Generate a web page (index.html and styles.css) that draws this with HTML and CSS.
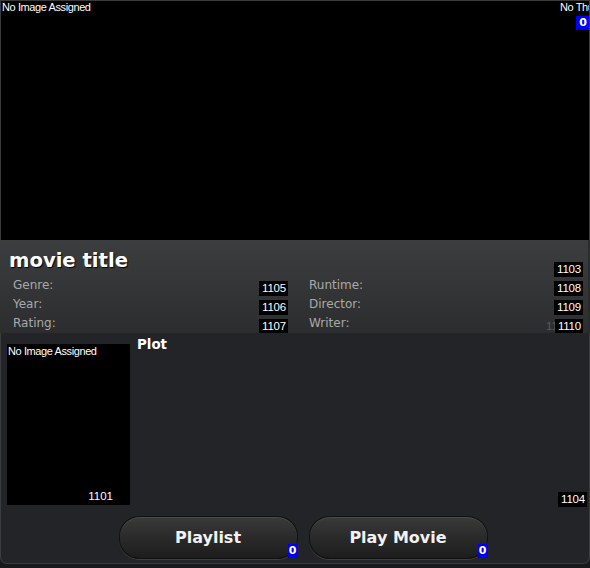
FILE: index.html
```html
<!DOCTYPE html>
<html>
<head>
<meta charset="utf-8">
<link rel="stylesheet" href="styles.css">
</head>
<body>
<div class="app">
  <div class="top">
    <div class="small-label">No Image Assigned</div>
    <div class="top-right">
      <div class="small-label clip">No Thumbnail Assigned</div>
      <span class="blue-badge">0</span>
    </div>
  </div>
  <div class="info">
    <div class="title-row">
      <div class="title">movie title</div>
      <span class="badge">1103</span>
    </div>
    <div class="fields">
      <div class="field"><span class="label">Genre:</span><span class="badge">1105</span></div>
      <div class="field"><span class="label">Runtime:</span><span class="badge">1108</span></div>
      <div class="field"><span class="label">Year:</span><span class="badge">1106</span></div>
      <div class="field"><span class="label">Director:</span><span class="badge">1109</span></div>
      <div class="field"><span class="label">Rating:</span><span class="badge">1107</span></div>
      <div class="field"><span class="label">Writer:</span><span class="right-group"><span class="ghost">1110</span><span class="badge">1110</span></span></div>
    </div>
  </div>
  <div class="lower">
    <div class="content">
      <div class="poster">
        <div class="small-label">No Image Assigned</div>
        <div class="poster-id">1101</div>
      </div>
      <div class="plot">
        <div class="plot-title">Plot</div>
        <span class="badge">1104</span>
      </div>
    </div>
    <div class="buttons">
      <div class="btn">Playlist<span class="blue-badge btn-badge">0</span></div>
      <div class="btn">Play Movie<span class="blue-badge btn-badge">0</span></div>
    </div>
  </div>
</div>
</body>
</html>
```
FILE: styles.css
```css
html, body {
  margin: 0;
  padding: 0;
  background: #18191b;
}
.app {
  width: 590px;
  height: 568px;
  display: flex;
  flex-direction: column;
  background: #18191b;
  overflow: hidden;
}
.top {
  height: 240px;
  flex: none;
  box-sizing: border-box;
  background: #000;
  border: 1px solid #3a3a3a;
  border-bottom: 0;
  display: flex;
  justify-content: space-between;
  align-items: flex-start;
}
.small-label {
  font-family: "Liberation Sans", Arial, sans-serif;
  font-size: 11px;
  letter-spacing: -0.4px;
  line-height: 12px;
  color: #fff;
  white-space: nowrap;
}
.top > .small-label {
  margin-left: 1px;
}
.top-right {
  width: 29px;
  overflow: hidden;
  display: flex;
  flex-direction: column;
  align-items: flex-end;
}
.top-right .clip {
  align-self: flex-start;
}
.blue-badge {
  display: inline-block;
  background: #0000f0;
  color: #fff;
  font-family: "DejaVu Sans", Verdana, sans-serif;
  font-weight: bold;
  font-size: 11px;
  line-height: 14px;
  height: 14px;
  padding: 0 2px;
}
.top-right .blue-badge {
  margin-top: 3px;
  padding: 0 2px 0 3px;
}
.info {
  height: 93px;
  flex: none;
  box-sizing: border-box;
  background: linear-gradient(#3c3d3f, #2c2d2f);
  border-right: 2px solid #2a2b2d;
  display: flex;
  flex-direction: column;
  padding-right: 5px;
}
.title-row {
  height: 37px;
  flex: none;
  display: flex;
  justify-content: space-between;
  align-items: flex-end;
  padding-left: 9px;
}
.title {
  font-family: "DejaVu Sans", Verdana, sans-serif;
  font-weight: bold;
  font-size: 19.6px;
  line-height: 24px;
  color: #fff;
  margin-bottom: 4px;
  text-shadow: 1px 1px 1px #000;
}
.badge {
  display: inline-block;
  background: #000;
  color: #fff;
  font-family: "Liberation Sans", Arial, sans-serif;
  font-size: 11.5px;
  letter-spacing: -0.2px;
  line-height: 15px;
  height: 15px;
  padding: 0 2px 0 3px;
}
.fields {
  display: grid;
  grid-template-columns: 275px 274px;
  column-gap: 21px;
  padding-left: 13px;
  grid-auto-rows: 19px;
}
.field {
  display: flex;
  justify-content: space-between;
  align-items: flex-end;
}
.label {
  font-family: "DejaVu Sans", Verdana, sans-serif;
  font-size: 12px;
  color: #a9a9a9;
  line-height: 15px;
  align-self: flex-start;
  margin-top: 1px;
}
.right-group {
  display: flex;
  align-items: flex-end;
}
.ghost {
  font-family: "Liberation Sans", Arial, sans-serif;
  font-size: 11.5px;
  line-height: 15px;
  color: #5a5b5d;
  margin-right: -15px;
}
.lower {
  flex: none;
  height: 231px;
  box-sizing: border-box;
  background: #222427;
  border: 1px solid #3a3c3f;
  border-top: 0;
  border-radius: 0 0 7px 7px;
  display: flex;
  flex-direction: column;
}
.content {
  display: flex;
  height: 170px;
  padding-top: 4px;
  padding-left: 6px;
  padding-right: 2px;
}
.poster {
  width: 123px;
  height: 161px;
  margin-top: 7px;
  background: #000;
  flex: none;
  display: flex;
  flex-direction: column;
  justify-content: space-between;
}
.poster .small-label {
  margin-left: 1px;
  margin-top: 1px;
}
.poster-id {
  font-family: "Liberation Sans", Arial, sans-serif;
  font-size: 11.5px;
  color: #fff;
  line-height: 14px;
  text-align: right;
  padding-right: 17px;
  padding-bottom: 2px;
}
.plot {
  flex: 1;
  margin-left: 7px;
  display: flex;
  flex-direction: column;
  justify-content: space-between;
  align-items: flex-start;
}
.plot .badge {
  align-self: flex-end;
}
.plot-title {
  font-family: "DejaVu Sans", Verdana, sans-serif;
  font-weight: bold;
  font-size: 13.4px;
  line-height: 16px;
  color: #fff;
}
.buttons {
  display: flex;
  justify-content: center;
  gap: 11px;
  margin-top: 9px;
  padding-left: 16px;
}
.btn {
  position: relative;
  width: 179px;
  height: 43px;
  box-sizing: border-box;
  border-radius: 21px / 20px;
  background: linear-gradient(#3a3a3b, #2a2a2b 50%, #1d1d1e);
  border: 1px solid #111;
  box-shadow: inset 0 1px 0 #4a4a4b, 0 1px 0 #3e3f42;
  color: #f2f2f2;
  font-family: "DejaVu Sans", Verdana, sans-serif;
  font-weight: bold;
  font-size: 16px;
  display: flex;
  align-items: center;
  justify-content: center;
  padding-bottom: 1px;
}
.btn-badge {
  position: absolute;
  right: -1px;
  bottom: 0;
  padding: 0 1px;
  width: 8px;
  text-align: center;
}
```
